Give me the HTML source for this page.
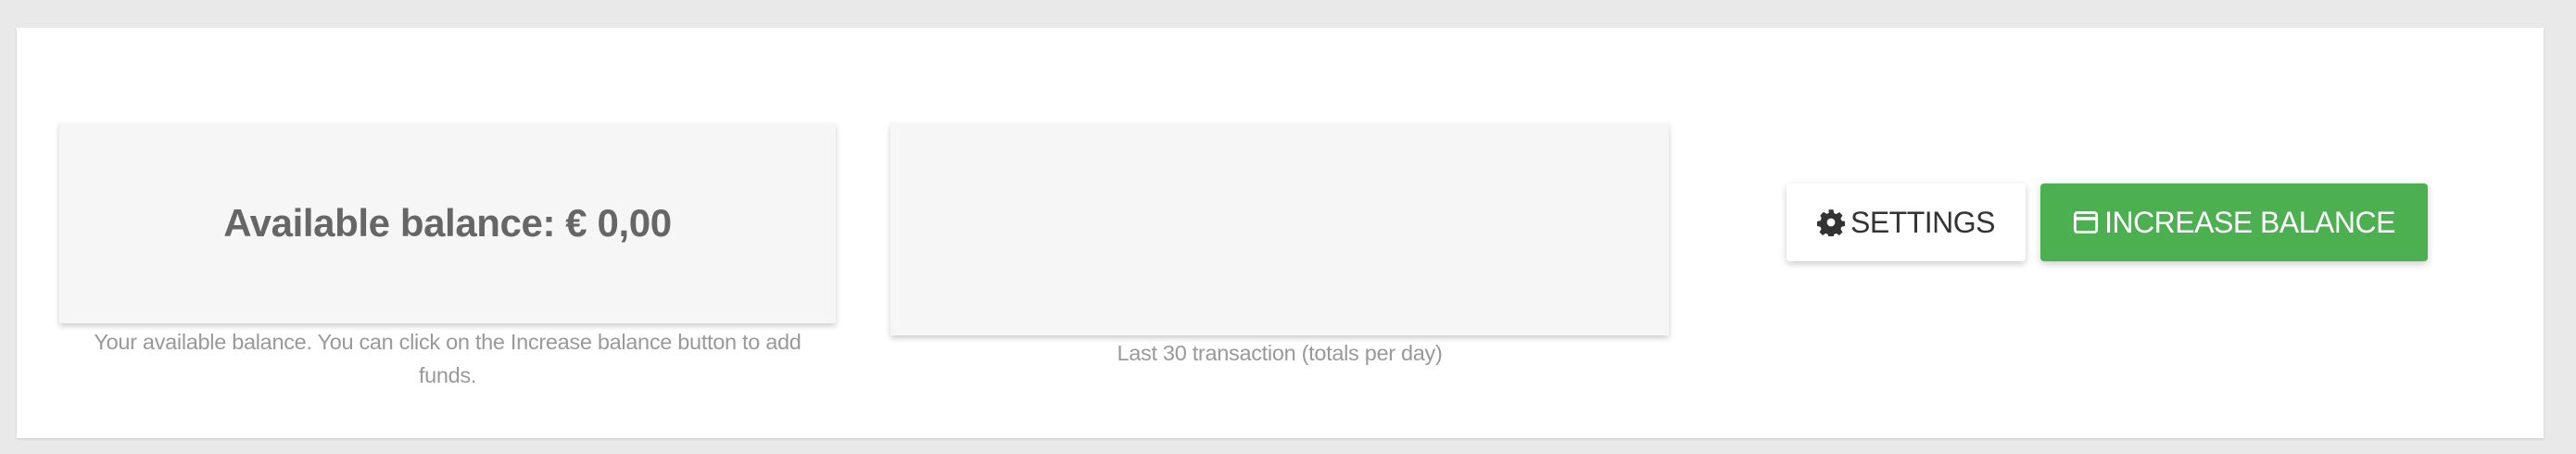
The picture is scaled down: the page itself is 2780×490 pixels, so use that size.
<!DOCTYPE html>
<html><head><style>
body{margin:0;width:2780px;height:490px;background:#e9e9e9;font-family:"Liberation Sans",sans-serif;position:relative;overflow:hidden}
.panel{position:absolute;left:18px;top:30px;width:2727px;height:443px;background:#fff;box-shadow:0 1px 2px rgba(0,0,0,.15)}
.card{position:absolute;background:#f6f6f6;box-shadow:0 3px 6px rgba(0,0,0,.2)}
.cap{position:absolute;color:#999;font-size:23.5px;text-align:center;line-height:36px;letter-spacing:-0.3px}
.btn{position:absolute;top:198px;height:84px;border-radius:4px;box-shadow:0 3px 8px rgba(0,0,0,.2);display:flex;align-items:center;justify-content:center;font-size:32px;letter-spacing:-0.5px}
</style></head><body>
<div class="panel"></div>
<div class="card" style="left:64px;top:133px;width:838px;height:216px;display:flex;align-items:center;justify-content:center;color:#666;font-weight:bold;font-size:42px;letter-spacing:-0.4px">Available balance: € 0,00</div>
<div class="cap" style="left:64px;top:351px;width:838px">Your available balance. You can click on the Increase balance button to add<br>funds.</div>
<div class="card" style="left:961px;top:133px;width:840px;height:229px"></div>
<div class="cap" style="left:961px;top:363px;width:840px">Last 30 transaction (totals per day)</div>
<div class="btn" style="left:1928px;width:258px;background:#fff;color:#333">
<svg width="30" height="30" viewBox="0 0 24 24" style="margin-right:6px"><path fill="#333" d="M10 1h4l.6 3 2 .9 2.6-1.7 2.8 2.8-1.7 2.6.9 2 3 .6v4l-3 .6-.9 2 1.7 2.6-2.8 2.8-2.6-1.7-2 .9-.6 3h-4l-.6-3-2-.9-2.6 1.7-2.8-2.8 1.7-2.6-.9-2-3-.6v-4l3-.6.9-2L2.8 5.8l2.8-2.8 2.6 1.7 2-.9zM12 8.5a3.5 3.5 0 1 0 0 7 3.5 3.5 0 1 0 0-7z" fill-rule="evenodd"/></svg>SETTINGS</div>
<div class="btn" style="left:2202px;width:418px;background:#4caf50;color:#fff">
<svg width="28" height="28" viewBox="0 0 24 24" style="margin-right:6px"><rect x="2" y="3" width="20" height="18" rx="2" fill="none" stroke="#fff" stroke-width="2.4"/><rect x="2" y="7" width="20" height="3" fill="#fff"/></svg>INCREASE BALANCE</div>
</body></html>
